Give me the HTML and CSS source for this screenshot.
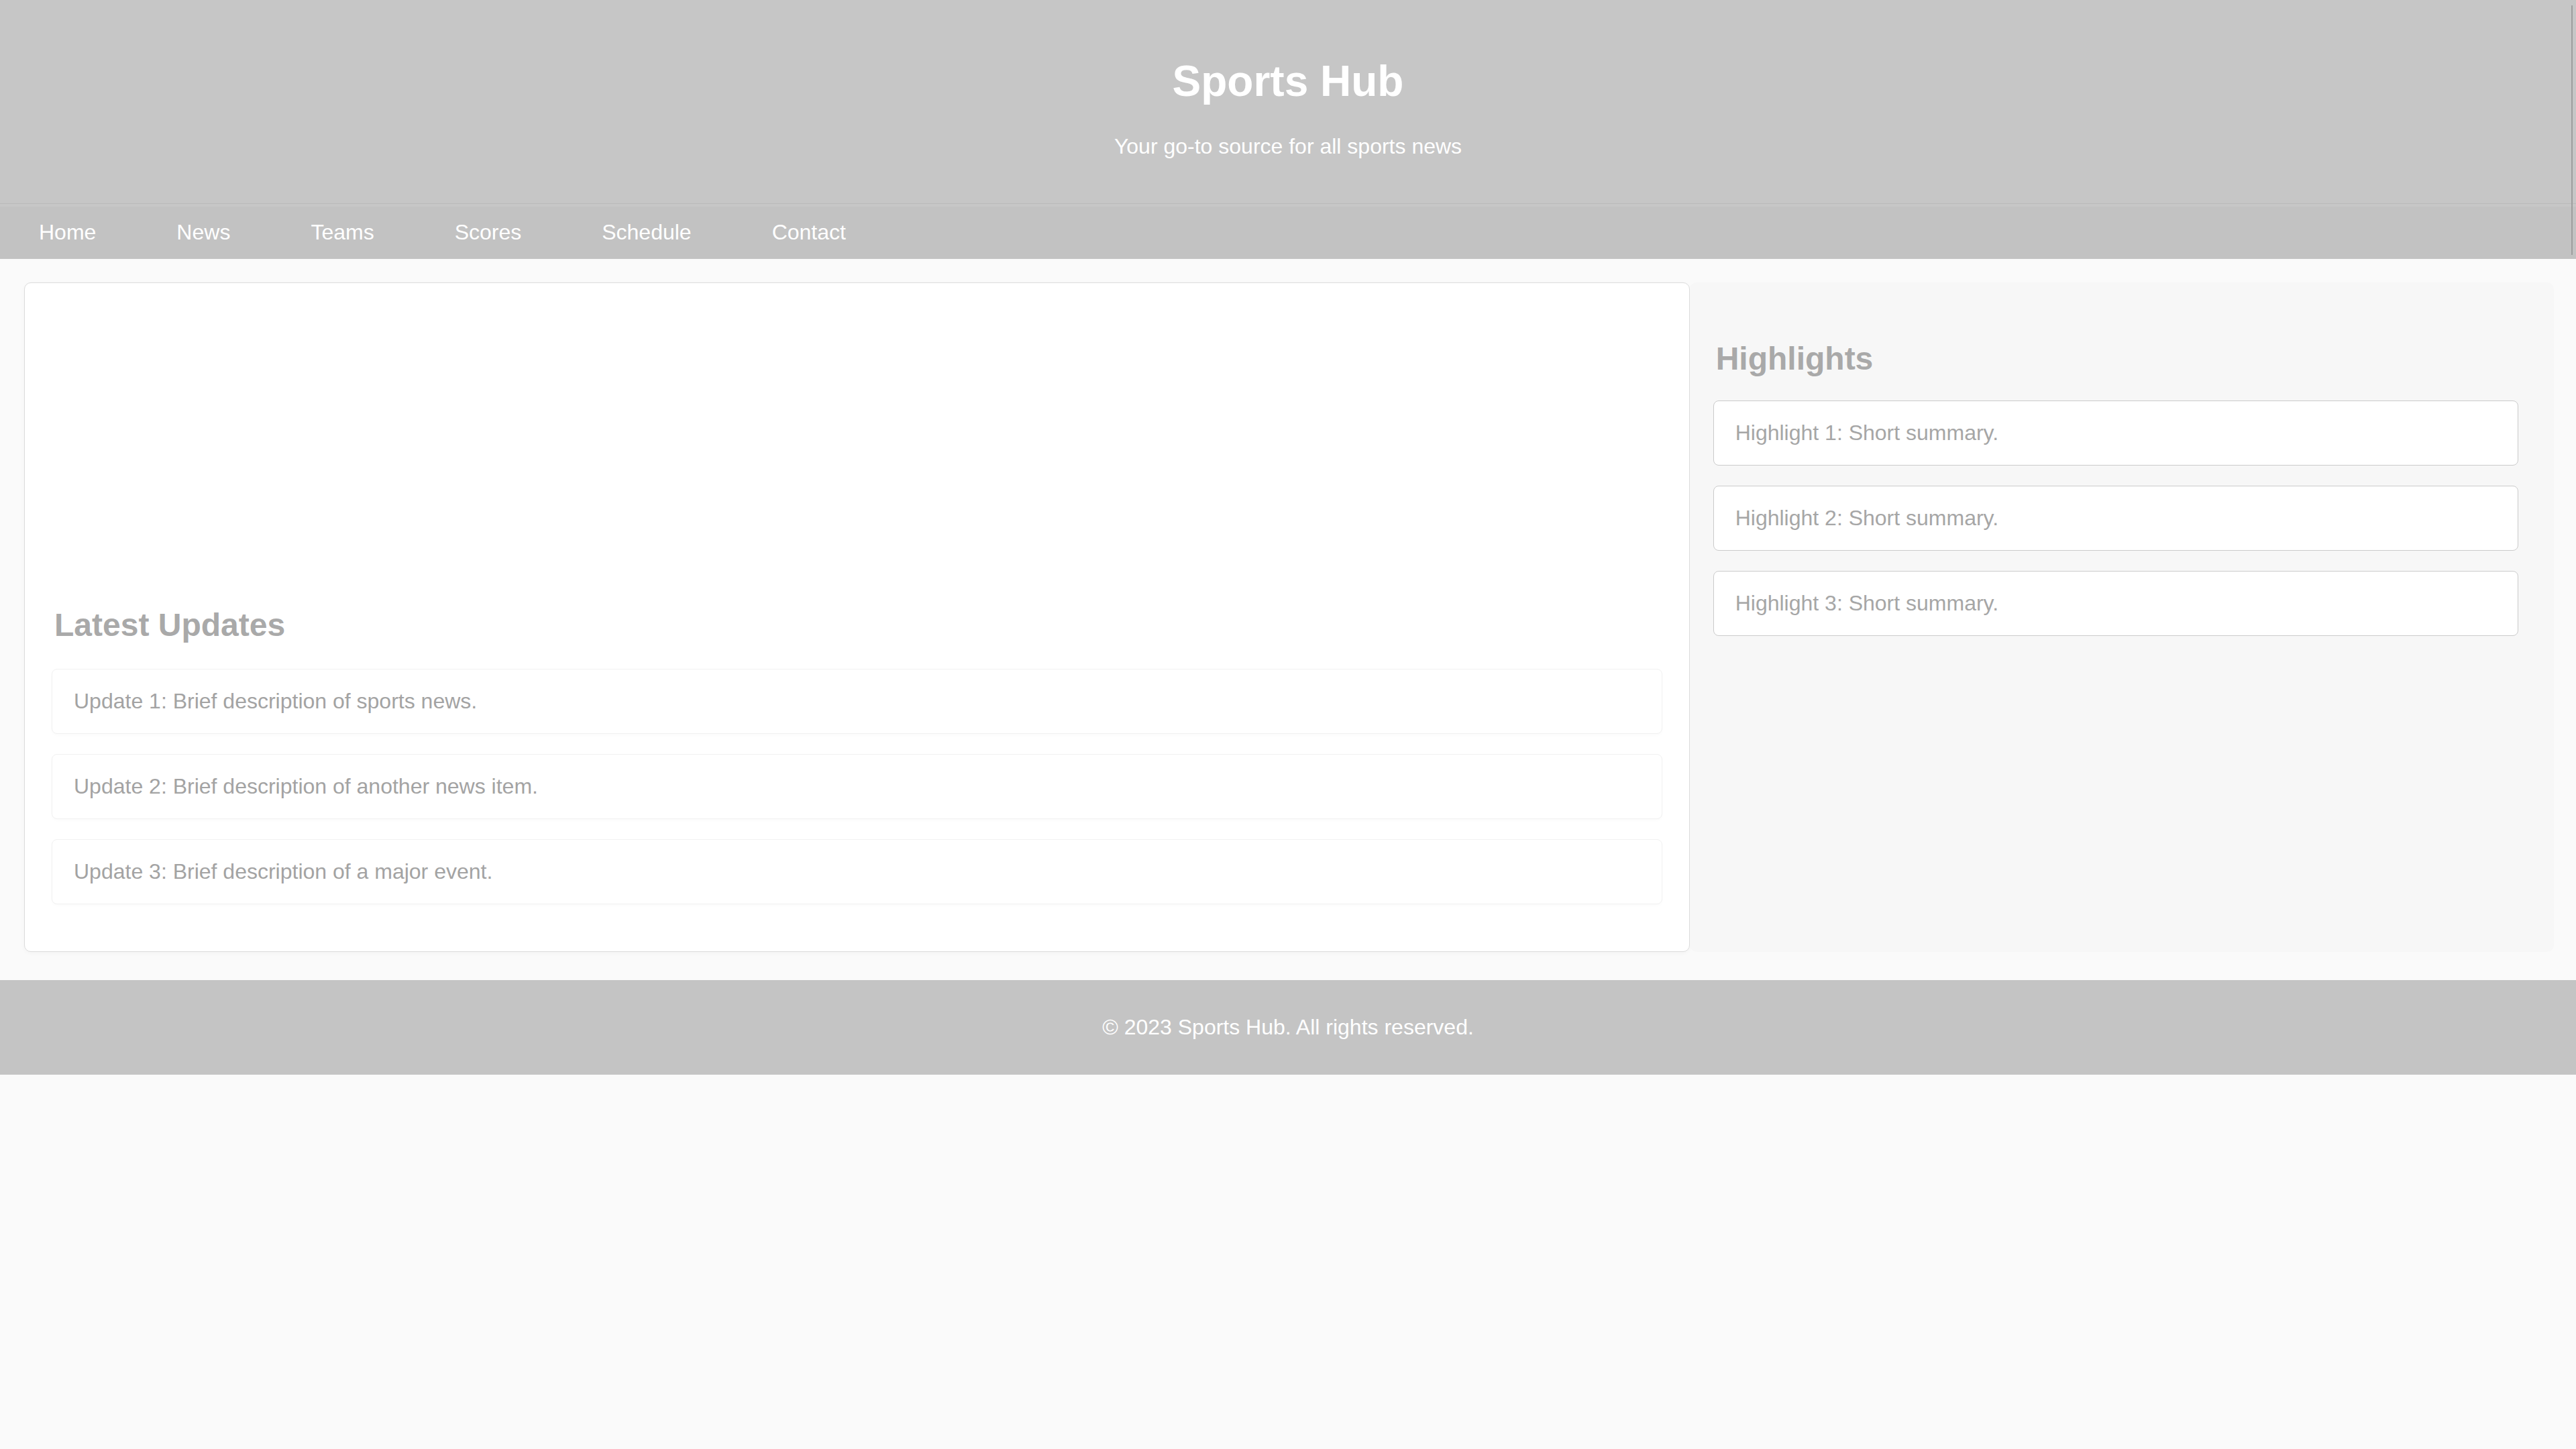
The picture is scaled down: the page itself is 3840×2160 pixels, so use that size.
FILE: index.html
```html
<!DOCTYPE html>
<html lang="en">
<head>
<meta charset="utf-8">
<title>Sports Hub</title>
<link rel="stylesheet" href="styles.css">
</head>
<body>
<div class="top">
  <header class="masthead">
    <h1>Sports Hub</h1>
    <p>Your go-to source for all sports news</p>
  </header>
  <nav class="nav">
    <a href="#">Home</a>
    <a href="#">News</a>
    <a href="#">Teams</a>
    <a href="#">Scores</a>
    <a href="#">Schedule</a>
    <a href="#">Contact</a>
  </nav>
</div>
<div class="container">
  <main class="content">
    <div class="feature"></div>
    <h2>Latest Updates</h2>
    <ul class="updates">
      <li>Update 1: Brief description of sports news.</li>
      <li>Update 2: Brief description of another news item.</li>
      <li>Update 3: Brief description of a major event.</li>
    </ul>
  </main>
  <aside class="sidebar">
    <h2>Highlights</h2>
    <ul class="highlights">
      <li>Highlight 1: Short summary.</li>
      <li>Highlight 2: Short summary.</li>
      <li>Highlight 3: Short summary.</li>
    </ul>
  </aside>
</div>
<footer class="footer">
  <p>© 2023 Sports Hub. All rights reserved.</p>
</footer>
</body>
</html>
```

FILE: styles.css
```css
* { box-sizing: border-box; }

html, body {
  margin: 0;
  padding: 0;
}

body {
  background: #fafafa;
  font-family: "Liberation Sans", Arial, sans-serif;
  font-size: 32px;
  color: #a4a4a4;
}

.top {
  position: relative;
}

.top::after {
  content: "";
  position: absolute;
  right: 5px;
  top: 8px;
  bottom: 6px;
  width: 2px;
  background: #9e9e9e;
}

.masthead {
  background: #c6c6c6;
  color: #ffffff;
  text-align: center;
  padding: 84px 0 66px;
  border-bottom: 1px solid #bababa;
}

.masthead h1 {
  margin: 0 0 42px;
  font-size: 64px;
  font-weight: bold;
}

.masthead p {
  margin: 0;
  font-size: 32px;
}

.nav {
  display: flex;
  background: #c2c2c2;
  box-shadow: inset 0 4px 0 #c7c7c7;
  padding: 24px 0 21px;
}

.nav a {
  color: #ffffff;
  text-decoration: none;
  padding: 0 60px;
}

.nav a:first-child {
  padding-left: 58px;
}

.container {
  display: flex;
  align-items: stretch;
  padding: 35px 33px 42px 36px;
}

.content {
  flex: 2 1 0;
  background: #ffffff;
  border: 1px solid #dcdcdc;
  border-radius: 10px;
  padding: 40px;
  box-shadow: 0 2px 6px rgba(0, 0, 0, 0.03);
}

.feature {
  height: 400px;
}

h2 {
  font-size: 48px;
  font-weight: bold;
  color: #a9a9a9;
  margin: 42px 0 38px;
  padding-left: 4px;
}

.updates,
.highlights {
  list-style: none;
  margin: 0;
  padding: 0;
}

.updates li,
.highlights li {
  background: #ffffff;
  border-radius: 8px;
  padding: 29px 32px;
  margin-bottom: 30px;
  line-height: normal;
}

.updates li {
  border: 1px solid #f1f1f1;
  box-shadow: 0 2px 4px rgba(0, 0, 0, 0.02);
  color: #a3a3a3;
}

.sidebar {
  flex: 1 1 0;
  background: #f7f7f7;
  border-radius: 10px;
  padding: 46px 53px 40px 35px;
}

.sidebar h2 {
  margin: 40px 0 35px;
}

.highlights li {
  border: 1px solid #cbcbcb;
  color: #a6a6a6;
}

.footer {
  background: #c4c4c4;
  color: #ffffff;
  text-align: center;
  padding: 52px 0;
}

.footer p {
  margin: 0;
}
```
